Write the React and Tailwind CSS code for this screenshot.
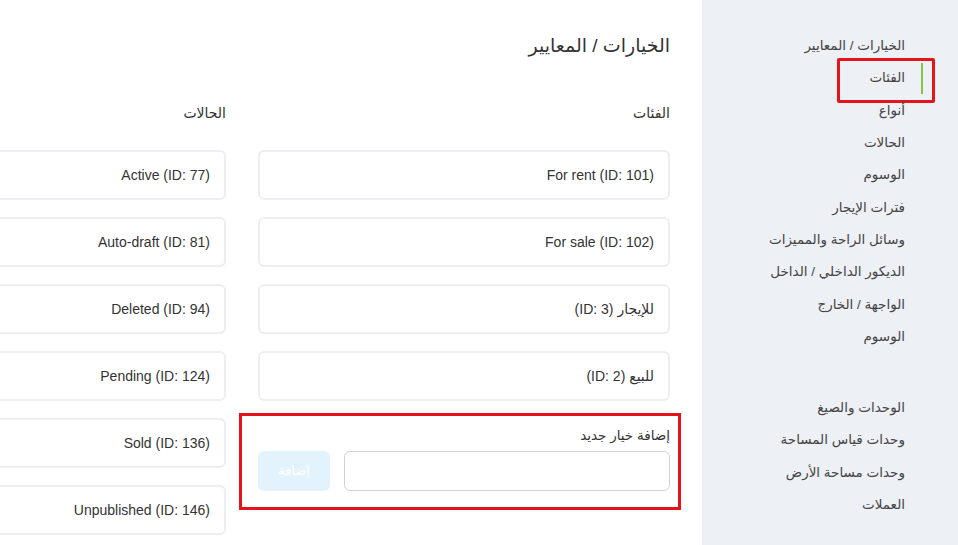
import React, { useState } from 'react';

const FONT = { fontFamily: '"Liberation Sans", "DejaVu Sans", sans-serif' };

const sideTop = [
  'الخيارات / المعايير',
  'الفئات',
  'أنواع',
  'الحالات',
  'الوسوم',
  'فترات الإيجار',
  'وسائل الراحة والمميزات',
  'الديكور الداخلي / الداخل',
  'الواجهة / الخارج',
  'الوسوم',
];

const sideBottom = ['الوحدات والصيغ', 'وحدات قياس المساحة', 'وحدات مساحة الأرض', 'العملات'];

const categories = ['For rent (ID: 101)', 'For sale (ID: 102)', 'للإيجار (ID: 3)', 'للبيع (ID: 2)'];

const statuses = [
  'Active (ID: 77)',
  'Auto-draft (ID: 81)',
  'Deleted (ID: 94)',
  'Pending (ID: 124)',
  'Sold (ID: 136)',
  'Unpublished (ID: 146)',
];

const OptionCard = ({ label }) => (
  <div className="h-[50px] flex items-center pr-[14px] rounded-[6px] border-2 border-[#eceef1] bg-white text-[14px] text-[#333]">
    {label}
  </div>
);

const App = () => {
  const [newOption, setNewOption] = useState('');
  const active = 1;

  return (
    <div dir="rtl" style={FONT} className="w-[958px] h-[545px] flex overflow-hidden bg-white">
      {/* Sidebar */}
      <aside className="w-[256px] shrink-0 bg-[#edf0f4] pt-[30px] pr-[35px] text-[13.5px] text-[#444]">
        {sideTop.map((item, i) => (
          <div key={i} className="relative h-[32.33px] flex items-center">
            <div
              className={`h-[31px] flex items-center pr-[16px] border-r-2 ${
                i === active ? 'border-[#8bc34a]' : 'border-transparent'
              }`}
            >
              {item}
            </div>
            {i === active && (
              <div className="absolute right-[-12px] top-[-4px] w-[98px] h-[45px] border-[3px] border-[#e5141b] rounded-[2px]" />
            )}
          </div>
        ))}
        <div className="h-[38.7px]" />
        {sideBottom.map((item, i) => (
          <div key={i} className="h-[32.33px] flex items-center pr-[18px]">
            {item}
          </div>
        ))}
      </aside>

      {/* Main */}
      <main className="flex-1 overflow-hidden pr-[32px] pt-[33px]">
        <h1 className="text-[19px] leading-[26px] text-[#333]">الخيارات / المعايير</h1>

        <div className="mt-[44px] grid grid-cols-[412px_412px] gap-x-[32px]">
          {/* Categories */}
          <section>
            <h2 className="text-[14px] leading-[20px] text-[#333]">الفئات</h2>
            <div className="mt-[27px] flex flex-col gap-[17px]">
              {categories.map((c) => (
                <OptionCard key={c} label={c} />
              ))}
            </div>

            <div className="relative mt-[26px]">
              <div className="text-[13.5px] leading-[18px] text-[#333]">إضافة خيار جديد</div>
              <div className="mt-[6px] flex gap-[14px]">
                <input
                  value={newOption}
                  onChange={(e) => setNewOption(e.target.value)}
                  className="h-[40px] w-[327px] rounded-[6px] border border-[#cfd3d8] bg-white px-3 text-[13px] outline-none"
                />
                <button
                  disabled={!newOption}
                  className="h-[40px] w-[72px] rounded-[6px] bg-[#e2f3fd] text-[13px] text-white"
                >
                  إضافة
                </button>
              </div>
              <div className="absolute right-[-11px] top-[-14px] w-[442px] h-[97px] border-[3px] border-[#e5141b] pointer-events-none" />
            </div>
          </section>

          {/* Statuses */}
          <section>
            <h2 className="text-[14px] leading-[20px] text-[#333]">الحالات</h2>
            <div className="mt-[27px] flex flex-col gap-[17px]">
              {statuses.map((s) => (
                <OptionCard key={s} label={s} />
              ))}
            </div>
          </section>
        </div>
      </main>
    </div>
  );
};

export default App;
